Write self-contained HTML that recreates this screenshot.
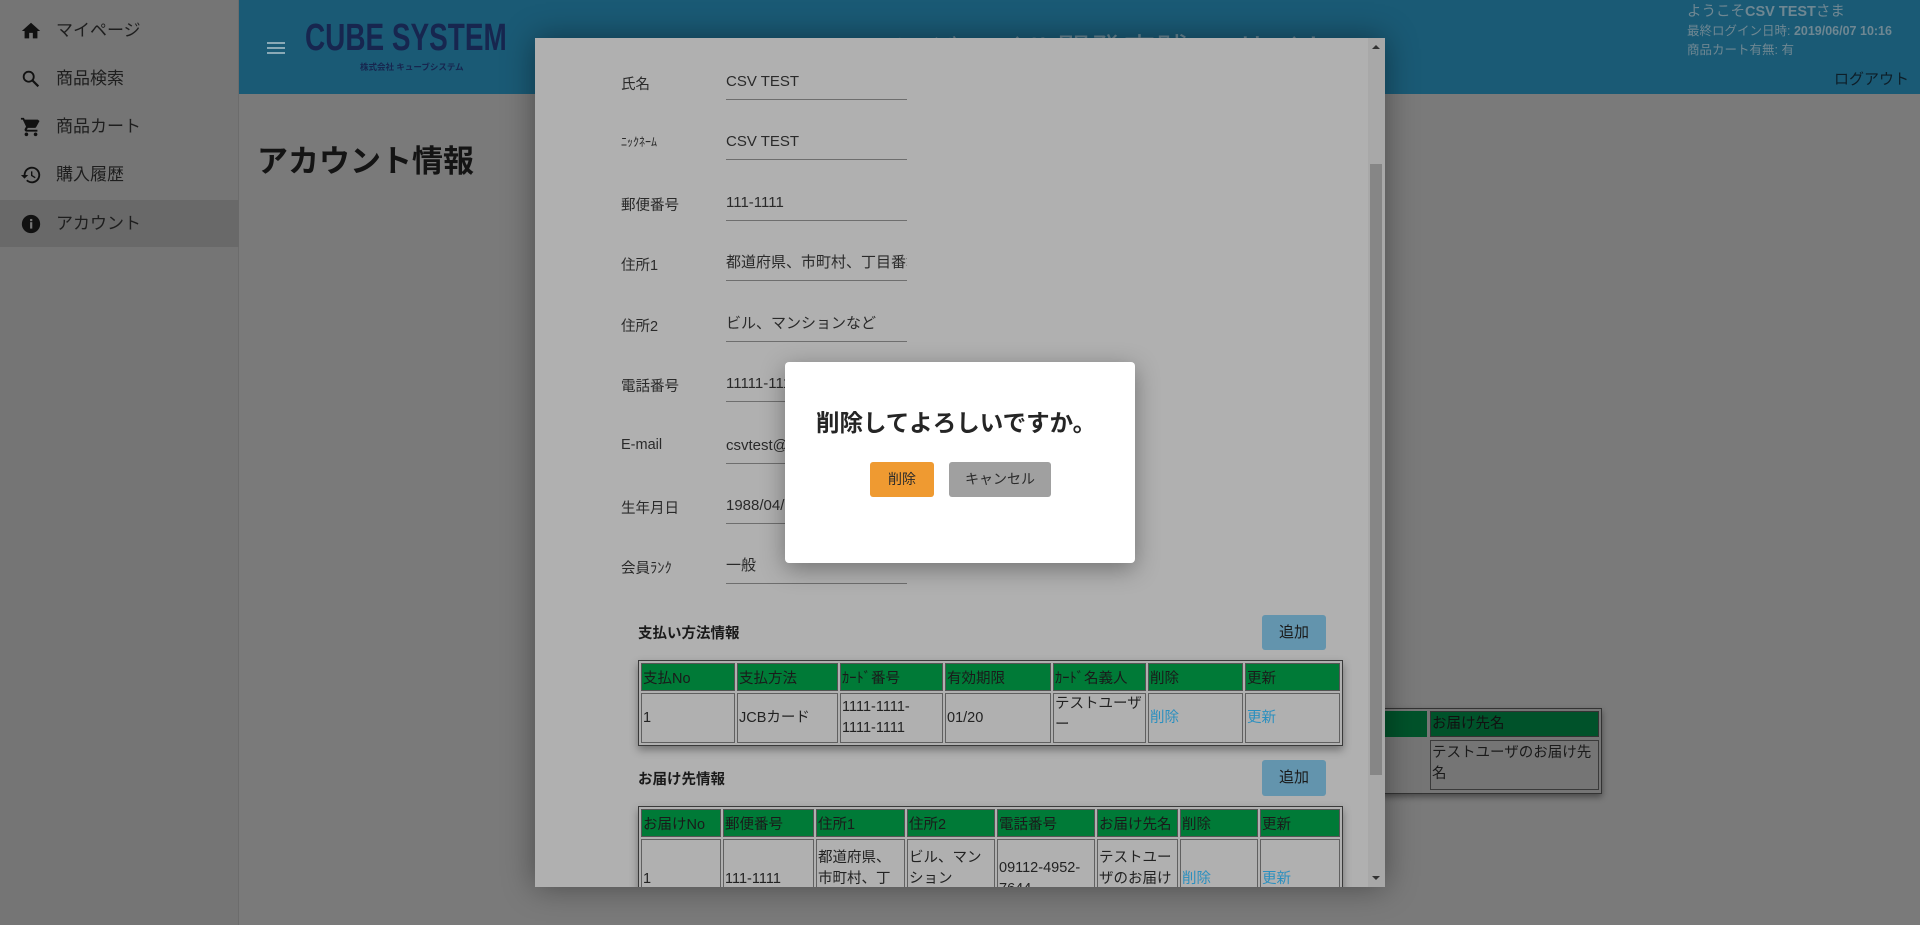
<!DOCTYPE html>
<html><head><meta charset="utf-8"><style>
*{margin:0;padding:0;box-sizing:border-box}
body{width:1920px;height:925px;overflow:hidden;background:#7a7a7a;font-family:"Liberation Sans","Noto Sans CJK JP",sans-serif;position:relative;color:#222}
.a{position:absolute}
#side{left:0;top:0;width:239px;height:925px;background:#757575;border-right:1px solid #6c6c6c}
.it{position:absolute;left:0;width:239px;height:48px;font-size:17px;color:#1e1e1e;line-height:48px;padding-left:56px}
.it svg{position:absolute;left:20px;top:13px}
#hdr{left:239px;top:0;width:1681px;height:94px;background:#1a5a75}
.lbl{position:absolute;left:621px;font-size:14.5px;color:#2a2a2a}
.val{position:absolute;left:726px;width:181px;font-size:15px;color:#2a2a2a;border-bottom:1px solid #6e6e6e;height:27px;line-height:18px;white-space:nowrap;overflow:hidden}
table{border-collapse:separate;border-spacing:2px;position:absolute;border:1px solid #3a3a3a;background:#b0b0b0;box-shadow:0 4px 8px rgba(0,0,0,.35)}
td{border:1px solid #606060;font-size:14.5px;color:#222;vertical-align:middle;padding:0 1px;line-height:21px}
th{background:#007a37;border:1px solid #555;font-weight:normal;font-size:14.5px;text-align:left;color:#1a1a1a;height:28px;padding:0 1px;white-space:nowrap}
.lk{color:#2a8fbf}
.btn{position:absolute;border-radius:3px;font-size:15px;text-align:center}
</style></head><body>
<div id="side" class="a">
 <div class="it" style="top:7px"><svg width="22" height="22" viewBox="0 0 24 24"><path d="M10 20v-6h4v6h5v-8h3L12 3 2 12h3v8z" fill="#111"/></svg>マイページ</div>
 <div class="it" style="top:55px"><svg width="22" height="22" viewBox="0 0 24 24"><circle cx="9.5" cy="9.5" r="5.5" fill="none" stroke="#111" stroke-width="2"/><path d="M13.5 13.5L20 20" stroke="#111" stroke-width="2.4"/></svg>商品検索</div>
 <div class="it" style="top:103px"><svg width="22" height="22" viewBox="0 0 24 24"><path d="M7 18c-1.1 0-2 .9-2 2s.9 2 2 2 2-.9 2-2-.9-2-2-2zM1 2v2h2l3.6 7.6-1.4 2.4C5.1 14.3 5 14.6 5 15c0 1.1.9 2 2 2h12v-2H7.4l1.1-2h7.5c.8 0 1.4-.4 1.7-1l3.6-6.5L19.4 4H5.2l-.9-2H1zm16 16c-1.1 0-2 .9-2 2s.9 2 2 2 2-.9 2-2-.9-2-2-2z" fill="#111"/></svg>商品カート</div>
 <div class="it" style="top:151px"><svg width="22" height="22" viewBox="0 0 24 24"><path d="M13 3a9 9 0 0 0-9 9H1l3.9 3.9L9 12H6a7 7 0 1 1 2.1 5l-1.4 1.4A9 9 0 1 0 13 3zm-1 5v5l4.3 2.5.7-1.2-3.5-2.1V8z" fill="#111"/></svg>購入履歴</div>
 <div class="it" style="top:200px;background:#696969;height:47px"><svg width="22" height="22" viewBox="0 0 24 24"><circle cx="12" cy="12" r="10" fill="#111"/><rect x="11" y="10" width="2.4" height="7" fill="#777"/><rect x="11" y="6.5" width="2.4" height="2.4" fill="#777"/></svg>アカウント</div>
</div>
<div id="hdr" class="a"></div>
<svg class="a" style="left:267px;top:41px" width="18" height="14"><rect y="1" width="18" height="2" fill="#8aa9b6"/><rect y="6" width="18" height="2" fill="#8aa9b6"/><rect y="11" width="18" height="2" fill="#8aa9b6"/></svg>
<div class="a" style="left:305px;top:17px;font-size:38px;font-weight:bold;color:#17264f;transform:scaleX(.735);transform-origin:left;white-space:nowrap">CUBE SYSTEM</div>
<div class="a" style="left:360px;top:61px;font-size:8.5px;font-weight:bold;color:#17264f;white-space:nowrap">株式会社 キューブシステム</div>
<div class="a" style="left:895px;top:24px;font-size:33px;color:#6a8795;white-space:nowrap">アジャイル開発実践ECサイト</div>
<div class="a" style="left:1687px;top:3px;font-size:14.5px;color:#6f8792;line-height:19px;white-space:nowrap">ようこそ<b>CSV TEST</b>さま<br><span style="font-size:12.5px">最終ログイン日時: <b>2019/06/07 10:16</b></span><br><span style="font-size:12.5px">商品カート有無: 有</span></div>
<div class="a" style="left:1834px;top:68px;font-size:15px;color:#0e1e28">ログアウト</div>
<div class="a" style="left:257px;top:136px;font-size:31px;font-weight:bold;color:#141414">アカウント情報</div>

<div class="a" style="left:1380px;top:708px;width:222px;height:86px;border:1px solid #333;background:#757575;box-shadow:0 3px 6px rgba(0,0,0,.4)"></div>
<div class="a" style="left:1385px;top:711px;width:42px;height:26px;background:#00522a"></div>
<div class="a" style="left:1430px;top:711px;width:169px;height:26px;background:#00522a;border:1px solid #333;font-size:14.5px;line-height:24px;color:#111;padding-left:1px">お届け先名</div>
<div class="a" style="left:1430px;top:740px;width:169px;height:50px;border:1px solid #3a3a3a;font-size:14.5px;line-height:21px;color:#1a1a1a;padding:2px 1px">テストユーザのお届け先名</div>

<div class="a" style="left:535px;top:38px;width:850px;height:849px;background:#b0b0b0;box-shadow:0 0 30px rgba(0,0,0,.4);overflow:hidden">
 <div class="a" style="right:0;top:0;width:17px;height:849px;background:#a8a8a8"></div>
 <div class="a" style="right:3px;top:126px;width:12px;height:611px;background:#868686"></div>
 <div class="a" style="right:5px;top:7px;width:0;height:0;border:4px solid transparent;border-bottom:4px solid #333;border-top:0"></div>
 <div class="a" style="right:5px;bottom:7px;width:0;height:0;border:4px solid transparent;border-top:4px solid #333;border-bottom:0"></div>
</div>
<div class="lbl" style="top:73px">氏名</div><div class="val" style="top:73px">CSV TEST</div>
<div class="lbl" style="top:133px;font-size:12px">ﾆｯｸﾈｰﾑ</div><div class="val" style="top:133px">CSV TEST</div>
<div class="lbl" style="top:194px">郵便番号</div><div class="val" style="top:194px">111-1111</div>
<div class="lbl" style="top:254px">住所1</div><div class="val" style="top:254px">都道府県、市町村、丁目番地</div>
<div class="lbl" style="top:315px">住所2</div><div class="val" style="top:315px">ビル、マンションなど</div>
<div class="lbl" style="top:375px">電話番号</div><div class="val" style="top:375px">11111-1111-1111</div>
<div class="lbl" style="top:437px">E-mail</div><div class="val" style="top:437px">csvtest@example.com</div>
<div class="lbl" style="top:497px">生年月日</div><div class="val" style="top:497px">1988/04/01</div>
<div class="lbl" style="top:557px">会員ﾗﾝｸ</div><div class="val" style="top:557px">一般</div>

<div class="a" style="left:638px;top:622px;font-size:14.5px;font-weight:bold;color:#1a1a1a">支払い方法情報</div>
<div class="btn" style="left:1262px;top:615px;width:64px;height:35px;line-height:35px;background:#6394ad;color:#1a1a1a">追加</div>
<table style="left:638px;top:660px;width:705px">
<tr><th style="width:94px">支払No</th><th style="width:101px">支払方法</th><th style="width:103px">ｶｰﾄﾞ番号</th><th style="width:106px">有効期限</th><th style="width:93px">ｶｰﾄﾞ名義人</th><th style="width:95px">削除</th><th>更新</th></tr>
<tr style="height:50px"><td>1</td><td>JCBカード</td><td>1111-1111-<br>1111-1111</td><td>01/20</td><td style="vertical-align:top">テストユーザ<br>ー</td><td class="lk">削除</td><td class="lk">更新</td></tr>
</table>
<div class="a" style="left:638px;top:768px;font-size:14.5px;font-weight:bold;color:#1a1a1a">お届け先情報</div>
<div class="btn" style="left:1262px;top:760px;width:64px;height:36px;line-height:36px;background:#6394ad;color:#1a1a1a">追加</div>
<div class="a" style="left:535px;top:800px;width:833px;height:87px;overflow:hidden">
<table style="left:103px;top:6px;width:705px">
<tr><th style="width:80px">お届けNo</th><th style="width:91px">郵便番号</th><th style="width:89px">住所1</th><th style="width:88px">住所2</th><th style="width:98px">電話番号</th><th style="width:81px">お届け先名</th><th style="width:78px">削除</th><th>更新</th></tr>
<tr style="height:80px"><td>1</td><td>111-1111</td><td>都道府県、<br>市町村、丁<br>目</td><td>ビル、マン<br>ション<br>など</td><td>09112-4952-<br>7644</td><td>テストユー<br>ザのお届け<br>先名</td><td class="lk">削除</td><td class="lk">更新</td></tr>
</table></div>

<div class="a" style="left:785px;top:362px;width:350px;height:201px;background:#fff;border-radius:4px;box-shadow:0 6px 24px rgba(0,0,0,.35)"></div>
<div class="a" style="left:816px;top:404px;font-size:23.5px;font-weight:bold;color:#252525;white-space:nowrap">削除してよろしいですか。</div>
<div class="btn" style="left:870px;top:462px;width:64px;height:35px;line-height:35px;background:#ef9a31;color:#2a2a2a;font-size:14px">削除</div>
<div class="btn" style="left:949px;top:462px;width:102px;height:35px;line-height:35px;background:#a0a0a0;color:#2a2a2a;font-size:14px">キャンセル</div>
</body></html>
